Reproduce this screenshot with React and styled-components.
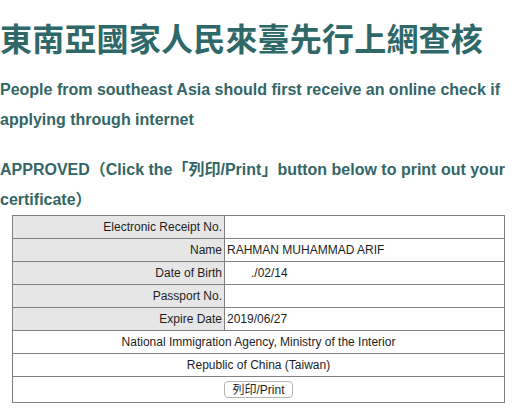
import styled, { createGlobalStyle } from 'styled-components';

const GlobalStyle = createGlobalStyle`
  body {
    margin: 0;
    background: #ffffff;
    font-family: 'Liberation Sans', Arial, 'Noto Sans CJK TC', sans-serif;
  }
`

const Page = styled.div`
  width: 515px;
  color: #336666;
`

const Title = styled.h1`
  margin: 17px 0 0 0;
  font-family: 'Noto Sans CJK TC', sans-serif;
  font-size: 32px;
  line-height: 40px;
  font-weight: 700;
  color: #2f6868;
  white-space: nowrap;
  letter-spacing: 0.2px;
`

const Notice = styled.p`
  margin: ${props => props.$top}px 0 0 0;
  font-size: 16px;
  line-height: 30px;
  font-weight: 700;
  color: #336666;
`

const Table = styled.table`
  width: 493px;
  margin-left: 12px;
  border-collapse: collapse;
  font-size: 12px;
  color: #1e1e1e;
`

const Label = styled.td`
  width: 209px;
  height: 22px;
  padding: 0 2px 0 0;
  background: #e6e6e6;
  border: 1px solid #808080;
  text-align: right;
`

const Value = styled.td`
  height: 22px;
  padding: 0 0 0 2px;
  border: 1px solid #808080;
  text-align: left;
`

const Wide = styled.td`
  height: ${props => props.$tall ? 25 : 22}px;
  padding: 0;
  border: 1px solid #808080;
  text-align: center;
`

const Shifted = styled.span`
  padding-left: 24px;
`

const PrintButton = styled.button`
  height: 17px;
  padding: 0 7px;
  background: #ffffff;
  border: 1px solid #b4b4b4;
  border-radius: 4px;
  font-family: 'Liberation Sans', Arial, 'Noto Sans CJK TC', sans-serif;
  font-size: 12px;
  line-height: 14px;
  color: #1e1e1e;
  vertical-align: middle;
`

const rows = [
  ['Electronic Receipt No.', ''],
  ['Name', 'RAHMAN MUHAMMAD ARIF'],
  ['Date of Birth', <Shifted>./02/14</Shifted>],
  ['Passport No.', ''],
  ['Expire Date', '2019/06/27'],
]

const App = () => {
  return (
    <Page>
      <GlobalStyle />
      <Title>東南亞國家人民來臺先行上網查核</Title>
      <Notice $top={18}>
        People from southeast Asia should first receive an online check if applying through internet
      </Notice>
      <Notice $top={20}>
        APPROVED（Click the「列印/Print」button below to print out your certificate）
      </Notice>
      <Table>
        <tbody>
          {rows.map(([label, value]) => (
            <tr key={label}>
              <Label>{label}</Label>
              <Value>{value}</Value>
            </tr>
          ))}
          <tr>
            <Wide colSpan={2}>National Immigration Agency, Ministry of the Interior</Wide>
          </tr>
          <tr>
            <Wide colSpan={2}>Republic of China (Taiwan)</Wide>
          </tr>
          <tr>
            <Wide colSpan={2} $tall>
              <PrintButton>列印/Print</PrintButton>
            </Wide>
          </tr>
        </tbody>
      </Table>
    </Page>
  )
}

export default App;
